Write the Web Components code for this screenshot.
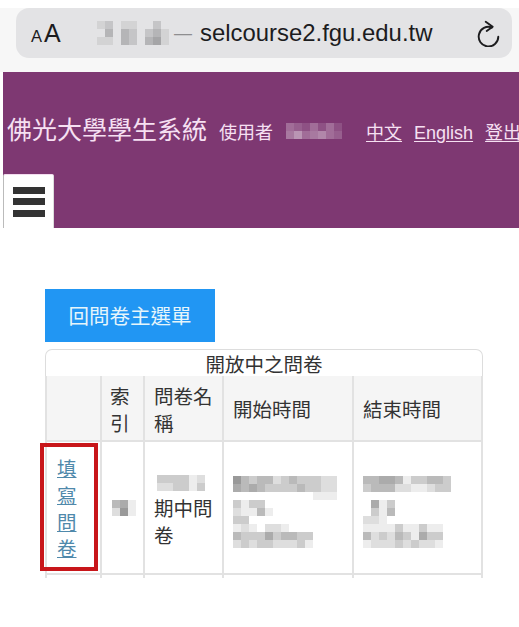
<!DOCTYPE html>
<html lang="zh-Hant">
<head>
<meta charset="utf-8">
<title>開放中之問卷</title>
<style>
  html, body { margin: 0; background: #fff; }
  body { width: 519px; height: 627px; overflow: hidden; font-family: "Noto Sans CJK TC", "Liberation Sans", sans-serif; color: #333; }
</style>
</head>
<body>
<safari-bar>
  <pixel-blur slot="site" ink="0,0,0" cell="8" rows="120110020|030320231|110320341"></pixel-blur>
</safari-bar>
<site-header>
  <pixel-blur slot="user" ink="255,255,255" cell="8" rows="4324242|5745643"></pixel-blur>
</site-header>
<survey-page></survey-page>

<script>
class PixelBlur extends HTMLElement { // stands in for the mosaic over private text
    constructor() {
        super();
        this.attachShadow({mode: 'open'});
    }
    connectedCallback() {
        const cell = +this.getAttribute('cell') || 8;
        const ink = this.getAttribute('ink') || '0,0,0';
        const rows = this.getAttribute('rows').split('|');
        const cols = Math.max(...rows.map(r => r.length));
        let cells = '';
        rows.forEach(r => {
            for (let i = 0; i < cols; i++) {
                const a = parseInt(r[i] || '0', 16) / 15;
                cells += `<i style="background:rgba(${ink},${a.toFixed(2)})"></i>`;
            }
        });
        this.shadowRoot.innerHTML = `
          <style>
            :host { display: grid; width: max-content; grid-template-columns: repeat(${cols}, ${cell}px); grid-auto-rows: ${cell}px; }
            i { display: block; }
          </style>${cells}`;
    }
}

class SafariBar extends HTMLElement {
    constructor() {
        super();
        this.attachShadow({mode: 'open'}).innerHTML = `
          <style>
            :host { display: block; height: 72px; background: linear-gradient(#fff 0 8px, #f7f7f7 8px); box-sizing: border-box; padding: 8px 7px 0 16px; font-family: "Liberation Sans", sans-serif; color: #1c1c1e; }
            .pill { height: 50px; border-radius: 13px; background: #e3e3e5; display: flex; align-items: center; }
            .aa { margin-left: 15px; width: 66px; font-size: 25px; line-height: 1; white-space: nowrap; }
            .aa small { font-size: 16.5px; margin-right: 2px; }
            .site { width: 77px; flex: none; }
            .dash { color: #8e8e90; font-size: 18px; }
            .url { margin-left: 8px; font-size: 23.9px; white-space: nowrap; }
            svg { margin-left: auto; margin-right: 12px; display: block; }
          </style>
          <div class="pill">
            <span class="aa"><small>A</small>A</span>
            <div class="site"><slot name="site"></slot></div>
            <span class="dash">—</span>
            <span class="url">selcourse2.fgu.edu.tw</span>
            <svg width="24" height="28" viewBox="0 0 24 28" fill="none" stroke="#1c1c1e" stroke-width="1.9" stroke-linecap="round" stroke-linejoin="round">
              <path d="M16 8.5A9.8 9.8 0 1 0 22.3 17.7"/>
              <path d="M9.7 2.7 16.7 7.7 10.7 12"/>
            </svg>
          </div>`;
    }
}

class SiteHeader extends HTMLElement {
    constructor() {
        super();
        this.attachShadow({mode: 'open'}).innerHTML = `
          <style>
            :host { display: block; margin-left: 3px; height: 156px; background: #7e3872; color: #f6e0f2; overflow: hidden; }
            .top { display: flex; align-items: baseline; height: 102px; padding-top: 38px; box-sizing: border-box; padding-left: 4px; white-space: nowrap; font-size: 18px; }
            .title { font-size: 25px; }
            .who { margin-left: 12px; }
            .user { margin-left: 13px; align-self: flex-start; margin-top: 13px; }
            a { color: inherit; text-decoration: underline; text-underline-offset: 2px; }
            .zh { margin-left: 24px; }
            .en { margin-left: 12px; font-family: "Liberation Sans", sans-serif; }
            .out { margin-left: 12px; }
            button { display: flex; flex-direction: column; justify-content: center; gap: 4.5px; width: 51px; height: 54px; padding: 0 0 0 9px; border: 1px solid #bbb; border-top-color: #f3dcef; border-right-color: #ddd; border-bottom: 0; border-radius: 2px 2px 0 0; background: #fff; }
            button i { display: block; width: 32px; height: 7px; background: #333; }
          </style>
          <div class="top">
            <span class="title">佛光大學學生系統</span>
            <span class="who">使用者</span>
            <span class="user"><slot name="user"></slot></span>
            <a class="zh" href="#">中文</a>
            <a class="en" href="#">English</a>
            <a class="out" href="#">登出</a>
          </div>
          <button aria-label="menu"><i></i><i></i><i></i></button>`;
    }
}

class SurveyPage extends HTMLElement {
    constructor() {
        super();
        this.attachShadow({mode: 'open'}).innerHTML = `
          <style>
            :host { display: block; padding: 61px 36px 0 45px; font-size: 19.5px; line-height: 26.7px; color: #333; }
            .back { display: block; width: 170px; height: 53px; line-height: 52px; background: #2196f3; color: #e6f5fb; text-align: center; text-decoration: none; font-size: 20.5px; }
            table { margin-top: 7px; width: 438px; table-layout: fixed; border-collapse: separate; border-spacing: 0; }
            caption { height: 27px; line-height: 27px; box-sizing: border-box; border: 1px solid #ddd; border-bottom: 0; border-radius: 7px 7px 0 0; text-align: center; }
            th, td { border-right: 2px solid #e2e2e2; border-bottom: 2px solid #e2e2e2; padding: 0 8px 0 9px; text-align: left; font-weight: 400; box-sizing: border-box; vertical-align: middle; }
            th:first-child, td:first-child { border-left: 2px solid #e2e2e2; }
            thead th { height: 66px; background: #f5f5f5; padding-top: 3px; }
            thead th:nth-child(2) { padding-left: 8px; }
            tbody td { height: 133px; padding-top: 8px; }
            .stub td { height: 3px; border-bottom: 0; padding: 0; }
            .fill { position: relative; padding: 0; }
            tbody td.fill { padding: 2px 0 0; }
            .fill a { color: #4f89ab; display: block; width: 20px; margin-left: 10px; }
            .mark { position: absolute; left: -7px; top: 1px; width: 58px; height: 128px; box-sizing: border-box; border: 4.5px solid #c8161a; pointer-events: none; }
            tbody td.idx { padding: 0 0 0 10px; }
            .name pixel-blur { margin: 0 0 4px 3px; }
            .stack { display: grid; }
          </style>
          <a class="back" href="#">回問卷主選單</a>
          <table>
            <caption>開放中之問卷</caption>
            <colgroup><col style="width:57px"><col style="width:43px"><col style="width:79px"><col style="width:130px"><col style="width:129px"></colgroup>
            <thead><tr><th></th><th>索引</th><th>問卷名稱</th><th>開始時間</th><th>結束時間</th></tr></thead>
            <tbody>
              <tr>
                <td class="fill"><a href="#">填寫問卷</a><span class="mark"></span></td>
                <td class="idx"><pixel-blur cell="8" rows="451|261"></pixel-blur></td>
                <td class="name"><pixel-blur cell="8" rows="333312|223313"></pixel-blur>期中問卷</td>
                <td>
                  <div class="stack">
                    <pixel-blur cell="8" rows="6434423433322|5454333343322|0000000000111"></pixel-blur>
                    <pixel-blur cell="8" rows="31330|21141"></pixel-blur>
                    <pixel-blur cell="8" rows="33000000000|1210221000|4333534433|2323322231"></pixel-blur>
                  </div>
                </td>
                <td>
                  <div class="stack">
                    <pixel-blur cell="8" rows="44554133443|34442211233"></pixel-blur>
                    <div style="height:8px"></div>
                    <pixel-blur cell="8" rows="0513|0314"></pixel-blur>
                    <pixel-blur cell="8" rows="2210000000|1111311311|4232431533|1222323221"></pixel-blur>
                  </div>
                </td>
              </tr>
              <tr class="stub"><td></td><td></td><td></td><td></td><td></td></tr>
            </tbody>
          </table>`;
    }
}

window.customElements.define('pixel-blur', PixelBlur);
window.customElements.define('safari-bar', SafariBar);
window.customElements.define('site-header', SiteHeader);
window.customElements.define('survey-page', SurveyPage);
</script>
</body>
</html>
